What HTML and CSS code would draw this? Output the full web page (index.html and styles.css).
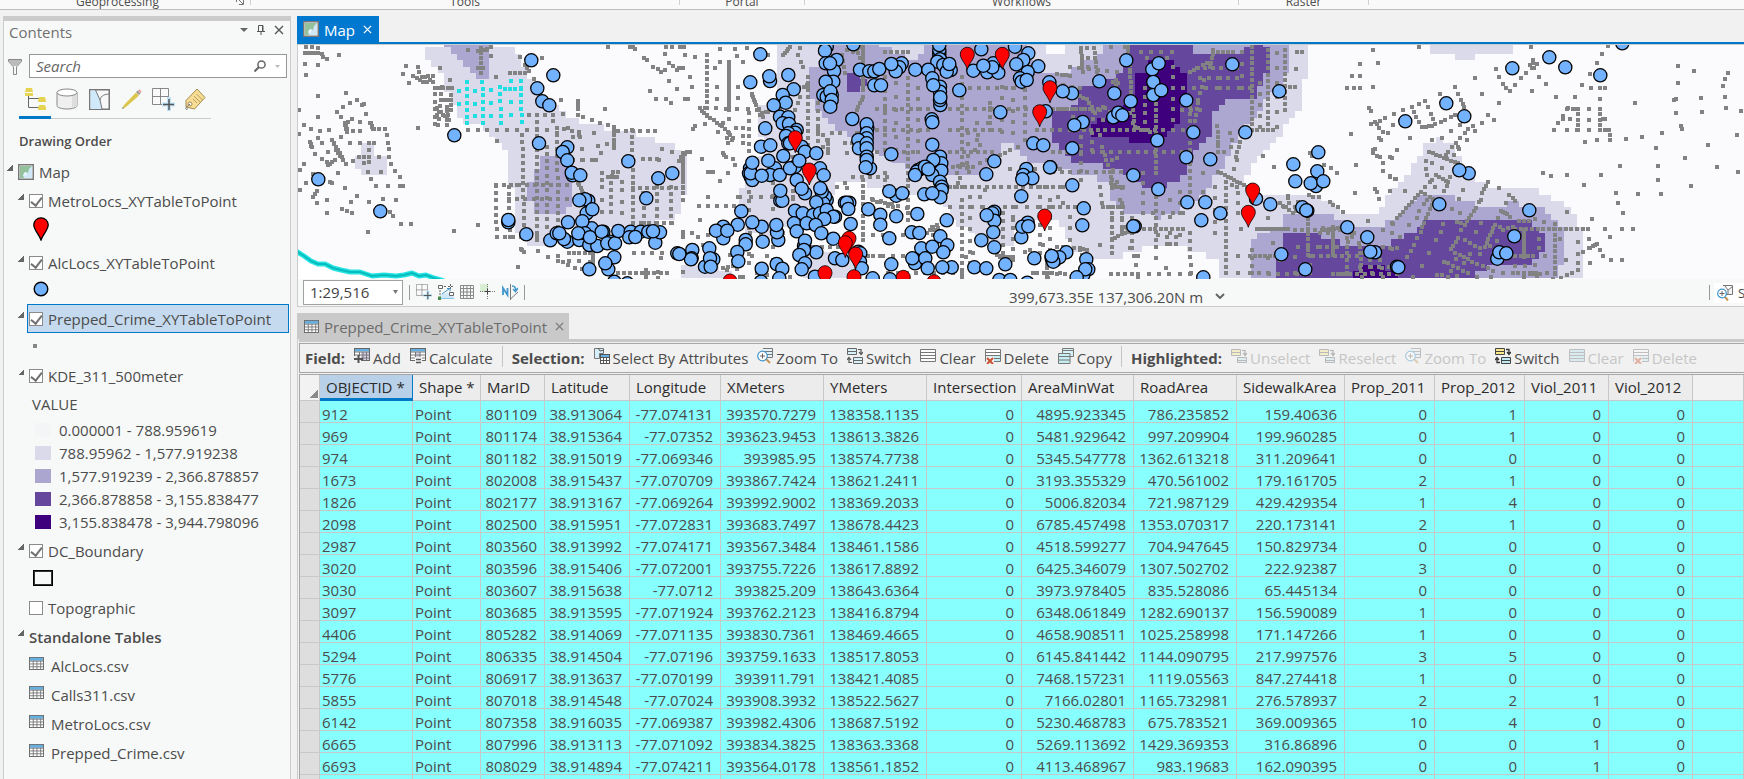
FILE: index.html
```html
<!DOCTYPE html>
<html lang="en">
<head>
<meta charset="utf-8">
<title>Map</title>
<link rel="stylesheet" href="styles.css">
</head>
<body>
<svg class="sprite" aria-hidden="true">
  <symbol id="i-table" viewBox="0 0 16 14"><rect x=".5" y=".5" width="15" height="13" fill="#fff" stroke="#666"/><rect x="1" y="1" width="14" height="3" fill="#64b0e0"/><path d="M1 4.5h14M1 7.5h14M1 10.5h14M4.5 4v9M8.5 4v9M12.5 4v9" stroke="#777" fill="none"/></symbol>
  <symbol id="i-map" viewBox="0 0 16 16"><rect x=".75" y=".75" width="14.5" height="14.5" fill="#fff" stroke="#777" stroke-width="1.5"/><path d="M2 2h12v12H2z" fill="#93c19b"/><path d="M14 2v12H6l-1-3 2-3 3 1 1-4z" fill="#cfe7f7"/><path d="M5 11l2-3 2 1-1 3z" fill="#e9f4fa"/></symbol>
  <symbol id="i-x" viewBox="0 0 10 10"><path d="M1 1l8 8M9 1l-8 8" stroke="currentColor" stroke-width="1.4" fill="none"/></symbol>
  <symbol id="i-add" viewBox="0 0 16 16"><rect x=".5" y=".5" width="15" height="12" fill="#fff" stroke="#666"/><path d="M1 1h14v2.5H1z" fill="#64b0e0"/><path d="M7 4h8v8H7z" fill="#d7cfe6"/><path d="M1 4h14M1 7h14M1 10h14M5.500 4v8M9 4v8M12.500 4v8" stroke="#777" fill="none"/><path d="M0 8h7v7H0z" fill="#f1f1f1"/><path d="M4.500 7v8M0 11h9" stroke="#555" stroke-width="2"/></symbol>
  <symbol id="i-calc" viewBox="0 0 16 16"><rect x=".5" y=".5" width="15" height="12" fill="#fff" stroke="#666"/><path d="M1 1h14v2.500H1z" fill="#64b0e0"/><path d="M5 4h5v6H5z" fill="#d7cfe6"/><path d="M1 4h14M1 7h14M1 10h14M5.500 4v8M10 4v8" stroke="#777" fill="none"/><path d="M5 9h7v7H5z" fill="#f1f1f1"/><path d="M6 11.500h5M6 14.500h5" stroke="#555" stroke-width="1.500"/></symbol>
  <symbol id="i-selattr" viewBox="0 0 16 16"><path d="M.5 .5h9v5h-4v5h-5z" fill="#d4eefa" stroke="#777"/><path d="M4 0l2 3 4-1" stroke="#555" fill="none"/><rect x="6.500" y="6.500" width="9" height="9" fill="#fff" stroke="#555"/><path d="M7 7h8v2H7z" fill="#64b0e0"/><path d="M7 9.500h8M7 12.500h8M9.500 9v6M12.500 9v6" stroke="#555" fill="none"/></symbol>
  <symbol id="i-zoom" viewBox="0 0 16 16"><path d="M6 .5h9.500v9H9" fill="#e3f3fa" stroke="#777"/><path d="M6 3.500h9M9 6.500h6" stroke="#777"/><path d="M9 11l4 4" stroke="#c99452" stroke-width="2"/><circle cx="5.500" cy="8" r="4.800" fill="#fff" stroke="#3f95cc" stroke-width="1.200"/><path d="M3 8h5M5.500 5.500v5" stroke="#666"/></symbol>
  <symbol id="i-switch" viewBox="0 0 16 16"><path d="M.5 .5h9v6h-9zM.5 3.500h9M6.500 9.500h9v6h-9zM6.500 12.500h9" fill="#d9f1f8" stroke="#666"/><path d="M11 1.500h3V6M12 4l2 2.500L16 4M5 14.500H2V10M0 12l2-2.500L4 12" fill="none" stroke="#555" stroke-width="1.200"/></symbol>
  <symbol id="i-switchy" viewBox="0 0 16 16"><path d="M.5 .5h9v6h-9zM.5 3.500h9" fill="#fbe88a" stroke="#444"/><path d="M6.500 9.500h9v6h-9zM6.500 12.500h9" fill="#bfeaf2" stroke="#444"/><path d="M11 1.500h3V6M12 4l2 2.500L16 4M5 14.500H2V10M0 12l2-2.500L4 12" fill="none" stroke="#333" stroke-width="1.300"/></symbol>
  <symbol id="i-unsel" viewBox="0 0 16 16"><path d="M.5 1.500h9v6h-9zM.5 4.500h9" fill="#fbe88a" stroke="#666"/><path d="M6.500 9.500h9v5h-9zM6.500 12.500h9" fill="#bfeaf2" stroke="#666"/><path d="M11 2.500h3V7M12 5l2 2.500L16 5" fill="none" stroke="#555" stroke-width="1.200"/></symbol>
  <symbol id="i-clear" viewBox="0 0 16 16"><path d="M.5 1.500h15v12H.5zM.5 4.500h15M.5 7.500h15M.5 10.500h15" fill="#fff" stroke="#777"/></symbol>
  <symbol id="i-clearb" viewBox="0 0 16 16"><path d="M.5 1.500h15v12H.5zM.5 4.500h15M.5 7.500h15M.5 10.500h15" fill="#b5e4f0" stroke="#777"/></symbol>
  <symbol id="i-delete" viewBox="0 0 16 16"><path d="M.5 1.500h15v12H.5z" fill="#fff" stroke="#777"/><path d="M1 8h14v5H1z" fill="#c5edf4"/><path d="M.5 4.500h15M.5 7.500h15M.5 10.500h15" stroke="#777"/><path d="M1 8.500h8V16H1z" fill="#f1f1f1"/><path d="M2 10l6 6M8 10l-6 6" stroke="#c9522f" stroke-width="2"/></symbol>
  <symbol id="i-copy" viewBox="0 0 16 16"><path d="M4.500 .5h11v8h-11zM4.500 2.500h11" fill="#d9f1f8" stroke="#777"/><path d="M.5 5.500h11.500v10H.5zM.5 8.500H12M.5 12H12" fill="#c5edf4" stroke="#777"/></symbol>
  <symbol id="i-gridplus" viewBox="0 0 23 23"><path d="M.5 .5h16v16H.5zM8.500 0v17M0 8.500h17" fill="#fafafa" stroke="#888"/><path d="M17 9v14M10 16.500h13" stroke="#bfe3f7" stroke-width="4"/><path d="M17 11v11M11 16.500h11" stroke="#555" stroke-width="1.500"/></symbol>
</svg>

<header class="ribbon">
  <div class="group group-geo"><span>Geoprocessing</span><svg class="launcher" viewBox="0 0 8 5"><path d="M.5 0v2M7.500 0v4.500H3M3 0l4 4" stroke="#777" fill="none"/></svg></div>
  <div class="group group-tools"><span>Tools</span></div>
  <div class="group group-portal"><span>Portal</span></div>
  <div class="group group-work"><span>Workflows</span></div>
  <div class="group group-raster"><span>Raster</span></div>
</header>

<div class="workspace">
  <aside class="contents">
    <div class="panel-head">
      <h1>Contents</h1>
      <button aria-label="Options"><svg width="8" height="4" viewBox="0 0 8 4"><path d="M0 0h8L4 4z" fill="#666"/></svg></button>
      <button aria-label="Pin"><svg width="8" height="10" viewBox="0 0 8 10"><path d="M1.500 6V.5h4.500V6M0 6.500h8M4 6.500V10M5.500 0v6" stroke="#555" fill="none"/></svg></button>
      <button aria-label="Close"><svg width="10" height="10"><use href="#i-x"/></svg></button>
    </div>
    <div class="search-row">
      <svg width="14" height="17" viewBox="0 0 14 17"><path d="M.5 1.500h13v2L8.500 9v7.500h-3V9L.5 3.500z" fill="#f7f9f8" stroke="#888"/><path d="M1 2h12v2L8.500 8h-3L1 4z" fill="#bbb"/></svg>
      <div class="search-box">
        <input type="text" placeholder="Search" aria-label="Search">
        <svg width="12" height="12" viewBox="0 0 12 12"><circle cx="7.500" cy="4.500" r="3.600" fill="none" stroke="#666" stroke-width="1.500"/><path d="M5 7L.5 11.500" stroke="#666" stroke-width="2"/></svg>
        <svg class="tiny" width="5" height="3" viewBox="0 0 5 3"><path d="M0 0h5L2.500 3z" fill="#bbb"/></svg>
      </div>
    </div>
    <nav class="views">
      <button class="active" aria-label="List by drawing order"><svg width="23" height="23" viewBox="0 0 23 23"><path d="M4.500 8v11.500H15M4.500 10.500H15" stroke="#666" fill="none"/><path d="M2 0h6l1 4H1zM1 5h8v3H1zM15 9h6l1 4h-8zM14 13h8v1h-8zM15 17h6l1 3h-8zM14 20h8v2h-8z" fill="#e5d352"/></svg></button>
      <button aria-label="List by data source"><svg width="22" height="22" viewBox="0 0 22 22"><path d="M1 4.500v13c0 2 4.500 3.500 10 3.500s10-1.500 10-3.500v-13" fill="#efefef" stroke="#888"/><path d="M16 6l5-1.500V18l-5 2z" fill="#ddd"/><ellipse cx="11" cy="4.500" rx="10" ry="3.500" fill="#fff" stroke="#888"/></svg></button>
      <button aria-label="List by selection"><svg width="21" height="21" viewBox="0 0 21 21"><rect x=".75" y=".75" width="19.500" height="19.500" fill="#f8f8f8" stroke="#777" stroke-width="1.500"/><path d="M1.500 1.500h5L11 11l2 9H1.500z" fill="#cfe9fa"/><path d="M6.500 1L11 11l2 9M11 11c1-5 5-5.500 9-6" fill="none" stroke="#777"/></svg></button>
      <button aria-label="List by editing"><svg width="21" height="21" viewBox="0 0 21 21"><path d="M1 20l2-4L15 3.500l3 3L5 18z" fill="#dcc64d"/><path d="M15 3l1.500-1.500 3 3L18 6z" fill="#999"/><path d="M17 1.500l1.500-1 2 2-1 1.500z" fill="#e8938a"/><path d="M1 20l1-2 1 1z" fill="#666"/></svg></button>
      <button aria-label="List by snapping"><svg width="23" height="23"><use href="#i-gridplus"/></svg></button>
      <button aria-label="List by labeling"><svg width="22" height="22" viewBox="0 0 22 22"><path d="M2 12.500L13 1l8 8.500-10.500 11.500-8.500-2z" fill="#f8dd94" stroke="#a58a4c"/><path d="M10 8l6 6M12.500 6l6 6M9 11l4 4" stroke="#b69c60"/><circle cx="6" cy="16" r="2" fill="#fff" stroke="#a58a4c"/><path d="M6 16l-4 3.500c-1 2 1 2.500 2 1" fill="none" stroke="#777"/></svg></button>
    </nav>
    <h2>Drawing Order</h2>
    <ul class="tree">
      <li class="row root"><i class="caret"></i><svg width="16" height="16"><use href="#i-map"/></svg><span>Map</span></li>
      <li class="row"><i class="caret"></i><label><input type="checkbox" checked>MetroLocs_XYTableToPoint</label></li>
      <li class="symbol sym-pin"><svg width="16" height="24" viewBox="0 0 16 24"><path d="M8 23C6 17 .8 13 .8 7.800a7.200 7 0 0 1 14.400 0C15.200 13 10 17 8 23z" fill="red" stroke="#000" stroke-width="1.300"/></svg></li>
      <li class="row"><i class="caret"></i><label><input type="checkbox" checked>AlcLocs_XYTableToPoint</label></li>
      <li class="symbol sym-circle"><svg width="16" height="16" viewBox="0 0 16 16"><circle cx="8" cy="8" r="6.800" fill="#73b2ff" stroke="#000" stroke-width="1.400"/></svg></li>
      <li class="row selected"><i class="caret"></i><label><input type="checkbox" checked>Prepped_Crime_XYTableToPoint</label></li>
      <li class="symbol sym-dot"><i></i></li>
      <li class="row"><i class="caret"></i><label><input type="checkbox" checked>KDE_311_500meter</label></li>
      <li class="value">VALUE</li>
      <li class="class"><i class="k1"></i>0.000001 - 788.959619</li>
      <li class="class"><i class="k2"></i>788.95962 - 1,577.919238</li>
      <li class="class"><i class="k3"></i>1,577.919239 - 2,366.878857</li>
      <li class="class"><i class="k4"></i>2,366.878858 - 3,155.838477</li>
      <li class="class last"><i class="k5"></i>3,155.838478 - 3,944.798096</li>
      <li class="row"><i class="caret"></i><label><input type="checkbox" checked>DC_Boundary</label></li>
      <li class="symbol sym-box"><i></i></li>
      <li class="row"><i class="caret none"></i><label><input type="checkbox">Topographic</label></li>
      <li class="row heading"><i class="caret"></i><span>Standalone Tables</span></li>
      <li class="file"><svg width="15" height="13"><use href="#i-table"/></svg>AlcLocs.csv</li>
      <li class="file"><svg width="15" height="13"><use href="#i-table"/></svg>Calls311.csv</li>
      <li class="file"><svg width="15" height="13"><use href="#i-table"/></svg>MetroLocs.csv</li>
      <li class="file"><svg width="15" height="13"><use href="#i-table"/></svg>Prepped_Crime.csv</li>
    </ul>
  </aside>

  <main class="views-area">
    <section class="map-view">
      <div class="tab tab-map"><svg width="16" height="16"><use href="#i-map"/></svg><span>Map</span><button aria-label="Close Map"><svg width="9" height="9"><use href="#i-x"/></svg></button></div>
      <svg class="map" id="map" role="img" aria-label="Crime, alcohol license and metro locations"></svg>
      <div class="status">
        <div class="tools">
          <select aria-label="Scale"><option>1:29,516</option></select>
          <svg class="drop" width="5" height="4" viewBox="0 0 5 4"><path d="M0 0h5L2.500 4z" fill="#777"/></svg>
          <i class="sep"></i>
          <button aria-label="Snapping"><svg width="16" height="16"><use href="#i-gridplus"/></svg></button>
          <button aria-label="Constraints"><svg width="16" height="16" viewBox="0 0 16 16"><path d="M2 11l8-2 6 4v2H2z" fill="#cfe9fa"/><path d="M.5 1.500h4v3h-4zM11.500 8.500h4v3h-4z" fill="#fff" stroke="#666"/><path d="M6 2.500h3M10 2.500h5M12.500 0v5M2 6v6" stroke="#666" stroke-dasharray="2 1"/><path d="M4 10l7-5M9 4.500h3v3" stroke="#3f95cc" fill="none"/><path d="M2 14.500h14" stroke="#8cc4e8"/><path d="M0 12.500h3V16H0z" fill="#4b8a4b"/></svg></button>
          <button aria-label="Grid"><svg width="14" height="14" viewBox="0 0 14 14"><path d="M.5 .5h13v13H.5zM3.500 0v14M7 0v14M10.500 0v14M0 3.500h14M0 7h14M0 10.500h14" fill="none" stroke="#888"/></svg></button>
          <button aria-label="Inference"><svg width="16" height="16" viewBox="0 0 16 16"><path d="M0 0h8v8H0z" fill="#d9efd3"/><path d="M7.500 0v16M0 7.500h16" stroke="#777" stroke-dasharray="1 1"/><path d="M7.500 5v5M5 7.500h5" stroke="#444"/></svg></button>
          <button aria-label="North arrow"><svg width="16" height="16" viewBox="0 0 16 16"><path d="M1 11V4l4.500 7V4" fill="none" stroke="#3f95cc" stroke-width="1.800"/><path d="M8.500 0v16M8.500 15L16 8" stroke="#777"/><path d="M10 2c3 0 4 2 3.500 5M11 5l2.500 2.500L16 4" stroke="#3f95cc" stroke-width="1.500" fill="none"/></svg></button>
          <i class="sep"></i>
        </div>
        <div class="coords">399,673.35E 137,306.20N m <svg width="10" height="6" viewBox="0 0 10 6"><path d="M1 1l4 4 4-4" fill="none" stroke="#666" stroke-width="2"/></svg></div>
        <div class="selected-count"><i class="sep"></i><div class="count-box"><svg width="16" height="16" viewBox="0 0 16 16"><path d="M6 .5h9.500v9H9M8 1l3 4 4-3M11 5v4" fill="#f4f4f4" stroke="#777"/><path d="M8 12l3 3.500" stroke="#c99452" stroke-width="2"/><circle cx="5" cy="8.500" r="4.300" fill="#fff" stroke="#3f95cc" stroke-width="1.200"/><path d="M2.500 8.500h5M5 6v5" stroke="#666"/></svg><span>Se</span></div></div>
      </div>
    </section>

    <section class="table-view">
      <div class="tab tab-table"><svg width="15" height="13"><use href="#i-table"/></svg><span>Prepped_Crime_XYTableToPoint</span><button aria-label="Close table"><svg width="9" height="9"><use href="#i-x"/></svg></button></div>
      <div class="toolbar">
        <b>Field:</b>
        <button><svg><use href="#i-add"/></svg>Add</button>
        <button><svg><use href="#i-calc"/></svg>Calculate</button>
        <i class="sep"></i>
        <b>Selection:</b>
        <button><svg><use href="#i-selattr"/></svg>Select By Attributes</button>
        <button><svg><use href="#i-zoom"/></svg>Zoom To</button>
        <button><svg><use href="#i-switch"/></svg>Switch</button>
        <button><svg><use href="#i-clear"/></svg>Clear</button>
        <button><svg><use href="#i-delete"/></svg>Delete</button>
        <button><svg><use href="#i-copy"/></svg>Copy</button>
        <i class="sep"></i>
        <b>Highlighted:</b>
        <button disabled><svg><use href="#i-unsel"/></svg>Unselect</button>
        <button disabled><svg><use href="#i-unsel"/></svg>Reselect</button>
        <button disabled><svg><use href="#i-zoom"/></svg>Zoom To</button>
        <button><svg><use href="#i-switchy"/></svg>Switch</button>
        <button disabled><svg><use href="#i-clearb"/></svg>Clear</button>
        <button disabled><svg><use href="#i-delete"/></svg>Delete</button>
      </div>
      <div class="table-wrap">
        <table>
          <colgroup><col class="w-sel"><col class="w-oid"><col class="w-shape"><col class="w-mar"><col class="w-lat"><col class="w-lon"><col class="w-m"><col class="w-m"><col class="w-int"><col class="w-area"><col class="w-m"><col class="w-side"><col class="w-prop"><col class="w-prop"><col class="w-viol"><col class="w-viol"><col></colgroup>
          <thead><tr><th class="corner"></th><th class="sorted">OBJECTID *</th><th>Shape *</th><th>MarID</th><th>Latitude</th><th>Longitude</th><th>XMeters</th><th>YMeters</th><th>Intersection</th><th>AreaMinWat</th><th>RoadArea</th><th>SidewalkArea</th><th>Prop_2011</th><th>Prop_2012</th><th>Viol_2011</th><th>Viol_2012</th><th class="rest"></th></tr></thead>
          <tbody id="rows"></tbody>
        </table>
      </div>
    </section>
  </main>
</div>
<script src="app.js"></script>
</body>
</html>
```
FILE: styles.css
```css
* { box-sizing: border-box; }
body {
  margin: 0;
  height: 100vh;
  overflow: hidden;
  display: flex;
  flex-direction: column;
  background: #f1f1f1;
  color: #4c4c4c;
  font: 15px/20px "Open Sans", "Noto Sans", sans-serif;
}
button { border: 0; padding: 0; background: none; color: inherit; font: inherit; display: flex; align-items: center; }
svg { flex: none; display: block; }
.sprite { position: absolute; width: 0; height: 0; }

.ribbon { flex: none; display: flex; height: 10px; background: #f9f9f9; border-bottom: 1px solid #bdbdbd; overflow: hidden; }
.group { display: flex; justify-content: center; align-items: flex-end; height: 5px; border-right: 1px solid #d0d0d0; font-size: 12px; line-height: 16px; }
.group span { margin-bottom: -5px; }
.group-geo { width: 251px; padding-left: 76px; justify-content: space-between; padding-right: 6px; }
.launcher { width: 8px; height: 5px; }
.group-tools { width: 429px; }
.group-portal { width: 125px; }
.group-work { width: 434px; }
.group-raster { width: 130px; }

.workspace { flex: 1; min-height: 0; display: flex; gap: 6px; padding: 6px 0 0 3px; }
.contents { flex: none; width: 288px; border: 1px solid #cbcbcb; border-top-width: 5px; border-bottom: 0; background: #f7f9f8; overflow: hidden; }
.panel-head { display: flex; align-items: center; gap: 9px; height: 22px; padding: 0 6px 0 5px; }
.panel-head h1 { margin: 0 auto 0 0; font-size: 15px; font-weight: 400; color: #707070; }
.panel-head button { color: #555; height: 14px; margin-bottom: 4px; }
.search-row { display: flex; align-items: center; gap: 7px; padding: 11px 3px 0 4px; }
.search-box { flex: 1; display: flex; align-items: center; height: 24px; border: 1px solid #979797; background: #fff; padding: 0 6px; gap: 9px; }
.search-box input { flex: 1; min-width: 0; border: 0; outline: 0; padding: 0; background: none; font: inherit; color: #555; }
.search-box input::placeholder { font-style: italic; color: #666; opacity: 1; }
.views { display: flex; width: 192px; height: 41px; margin-left: 15px; border-bottom: 1px solid #cbcbcb; }
.views button { width: 32px; height: 41px; justify-content: center; padding-top: 4px; border-bottom: 3px solid transparent; }
.views .active { border-color: #0078c8; }
h2 { margin: 12px 0 6px 15px; font-size: 13px; line-height: 20px; font-weight: 600; }

.tree { list-style: none; margin: 0; padding: 0; }
.row { display: flex; align-items: center; height: 29px; padding-left: 14px; }
.row.root { padding-left: 3px; gap: 5px; }
.row.root .caret { margin-right: 0; }
.row label { display: flex; align-items: center; gap: 5px; height: 29px; flex: 1; padding-left: 1px; margin-right: 1px; border: 1px solid transparent; }
.row.selected label { background: #c5daee; border-color: #0078c8; }
.caret { width: 6px; height: 6px; margin: 0 3px 8px 0; background: linear-gradient(135deg, transparent 50%, #666 50%); flex: none; }
.caret.none { background: none; }
.heading span { font-weight: 600; padding-left: 2px; }
input[type=checkbox] { appearance: none; margin: 0; width: 14px; height: 14px; border: 1px solid #8a8a8a; background: #fff; display: grid; place-items: center; }
input[type=checkbox]:checked::after { content: ""; width: 5px; height: 9px; border: solid #707070; border-width: 0 2px 2px 0; transform: rotate(38deg); margin-bottom: 2px; }
.symbol { display: flex; align-items: center; padding-left: 29px; }
.sym-pin { height: 33px; padding-bottom: 5px; }
.sym-circle { height: 27px; padding-bottom: 3px; padding-left: 29px; }
.sym-dot { height: 28px; padding-bottom: 2px; }
.sym-dot i { width: 4px; height: 4px; background: #868686; }
.sym-box { height: 28px; padding-bottom: 2px; }
.sym-box i { width: 20px; height: 16px; border: 1px solid #000; box-shadow: inset 0 0 0 1px #333; }
.value { height: 28px; line-height: 28px; padding-left: 28px; font-weight: 500; }
.class { display: flex; align-items: center; height: 23px; gap: 8px; padding-left: 31px; }
.class.last { margin-bottom: 3px; }
.class i { width: 16px; height: 14px; }
.k1 { background: #f4f5f6; }
.k2 { background: #dadaea; }
.k3 { background: #aaa6d0; }
.k4 { background: #65489e; }
.k5 { background: #3f007d; }
.file { display: flex; align-items: center; height: 29px; gap: 7px; padding-left: 25px; }
.file svg { margin-bottom: 4px; }

.views-area { flex: 1; min-width: 0; display: flex; flex-direction: column; }
.tab { display: flex; align-items: center; width: max-content; height: 26px; padding: 0 7px 0 6px; }
.tab span { margin: 2px 8px 0 5px; }
.tab-map { background: #0078d0; color: #fff; }
.map-view { flex: none; border-bottom: 1px solid #cbcbcb; }
.map { width: 100%; height: 235px; margin-top: 2px; border: 1px solid #cbcbcb; border-width: 1px 0 0 1px; background: #fbfbfe; box-shadow: 0 -2px 0 #0078c8; }
.status { display: flex; justify-content: space-between; height: 27px; background: #f7f9f8; border-left: 1px solid #cbcbcb; overflow: hidden; }
.tools { display: flex; align-items: center; gap: 6px; padding-left: 5px; padding-bottom: 1px; }
.tools select { appearance: none; width: 100px; height: 25px; border: 1px solid #a0a0a0; border-radius: 0; background: #fff; padding: 0 6px; font: inherit; color: #444; }
.tools .drop { margin: 0 5px 0 -16px; }
.sep { width: 1px; height: 15px; background: #999; }
.coords { display: flex; align-items: center; gap: 12px; padding-top: 8px; line-height: 18px; }
.coords svg { margin-bottom: 2px; }
.selected-count { display: flex; align-items: center; gap: 4px; }
.count-box { display: flex; align-items: center; gap: 5px; width: 30px; height: 20px; padding-left: 3px; background: #fff; overflow: hidden; font-size: 13px; }

.table-view { flex: 1; min-height: 0; display: flex; flex-direction: column; margin-top: 6px; border-left: 1px solid #cbcbcb; }
.tab-table { flex: none; background: #c9c9c9; color: #6b6b6b; padding-right: 5px; }
.tab-table button { color: #777; }
.toolbar { flex: none; display: flex; align-items: center; gap: 9px; height: 34px; margin-left: 1px; padding: 0 5px 2px 6px; border-top: 3px solid #c9c9c9; box-shadow: inset 0 1px 0 #f1f1f1, inset 0 2px 0 #a6a6a6, inset 1px 0 0 #a6a6a6; border-bottom: 1px solid #a6a6a6; overflow: hidden; white-space: nowrap; }
.toolbar b { margin: 3px 0 0; }
.toolbar button { gap: 3px; padding-top: 3px; }
.toolbar button svg { width: 16px; height: 16px; margin-bottom: 3px; }
.toolbar button:disabled { color: #c6c6c6; }
.toolbar button:disabled svg { opacity: .4; }
.toolbar .sep { height: 21px; background: #c4c4c4; }
.table-wrap { flex: 1; min-height: 0; margin: 1px 0 0 1px; overflow: hidden; border: 1px solid #a6a6a6; border-width: 1px 0 0 1px; background: #8ff; }
table { width: 100%; table-layout: fixed; border-collapse: separate; border-spacing: 0; }
th, td { padding: 0; border: 1px solid #c8c8c8; border-width: 0 1px 1px 0; text-align: left; white-space: nowrap; overflow: hidden; }
th { height: 26px; padding: 0 0 2px 6px; background: #ececec; color: #2b2b2b; font-weight: 400; }
th.sorted { background: #b9d1e8; border-right-color: #0078c8; border-bottom: 3px solid #0078c8; padding-bottom: 0; }
th.rest { background: #f2f2f2; }
th.corner { background: linear-gradient(135deg, transparent 50%, #8a8a8a 50%) no-repeat right 1px bottom 2px / 8px 8px #f2f2f2; }
td { height: 22px; text-align: right; background: #8ff; }
td:first-child { background: #dedede; }
td span { display: block; height: 19px; margin-bottom: 2px; padding: 3px 7px 0 0; overflow: hidden; }
td:nth-child(2), td:nth-child(3) { text-align: left; }
td:nth-child(2) span, td:nth-child(3) span { padding-left: 2px; }
.w-sel { width: 20px; }
.w-oid { width: 93px; }
.w-shape { width: 68px; }
.w-mar { width: 64px; }
.w-lat { width: 85px; }
.w-lon { width: 91px; }
.w-m { width: 103px; }
.w-int { width: 95px; }
.w-area { width: 112px; }
.w-side { width: 108px; }
.w-prop { width: 90px; }
.w-viol { width: 84px; }
```
FILE: app.js
```javascript
const records = `912 801109 38.913064 -77.074131 393570.7279 138358.1135 0 4895.923345 786.235852 159.40636 0 1 0 0
969 801174 38.915364 -77.07352 393623.9453 138613.3826 0 5481.929642 997.209904 199.960285 0 1 0 0
974 801182 38.915019 -77.069346 393985.95 138574.7738 0 5345.547778 1362.613218 311.209641 0 0 0 0
1673 802008 38.915437 -77.070709 393867.7424 138621.2411 0 3193.355329 470.561002 179.161705 2 1 0 0
1826 802177 38.913167 -77.069264 393992.9002 138369.2033 0 5006.82034 721.987129 429.429354 1 4 0 0
2098 802500 38.915951 -77.072831 393683.7497 138678.4423 0 6785.457498 1353.070317 220.173141 2 1 0 0
2987 803560 38.913992 -77.074171 393567.3484 138461.1586 0 4518.599277 704.947645 150.829734 0 0 0 0
3020 803596 38.915406 -77.072001 393755.7226 138617.8892 0 6425.346079 1307.502702 222.92387 3 0 0 0
3030 803607 38.915638 -77.0712 393825.209 138643.6364 0 3973.978405 835.528086 65.445134 0 0 0 0
3097 803685 38.913595 -77.071924 393762.2123 138416.8794 0 6348.061849 1282.690137 156.590089 1 0 0 0
4406 805282 38.914069 -77.071135 393830.7361 138469.4665 0 4658.908511 1025.258998 171.147266 1 0 0 0
5294 806335 38.914504 -77.07196 393759.1633 138517.8053 0 6145.841442 1144.090795 217.997576 3 5 0 0
5776 806917 38.913637 -77.070199 393911.791 138421.4085 0 7468.157231 1119.05563 847.274418 1 0 0 0
5855 807018 38.914548 -77.07024 393908.3932 138522.5627 0 7166.02801 1165.732981 276.578937 2 2 1 0
6142 807358 38.916035 -77.069387 393982.4306 138687.5192 0 5230.468783 675.783521 369.009365 10 4 0 0
6665 807996 38.913113 -77.071092 393834.3825 138363.3368 0 5269.113692 1429.369353 316.86896 0 0 1 0
6693 808029 38.914894 -77.074211 393564.0178 138561.1852 0 4113.468967 983.19683 162.090395 0 0 1 0`;

const cell = v => `<td><span>${v}</span></td>`;
document.getElementById("rows").innerHTML = records.split("\n").map(line => {
  const [id, ...rest] = line.split(" ");
  return "<tr>" + ["", id, "Point", ...rest, ""].map(cell).join("") + "</tr>";
}).join("") + "<tr>" + cell("").repeat(17) + "</tr>";

/* Density surface: outlines per class, filled cell by cell. */
const OX = 298, OY = 45, CELL = 6.4, PX = 5.4 - 6.4, PY = 2.3 - 6.4;
const surface = [
  ["#dbdaeb", [419,45,425,54,431,66,444,79,444,87,451,92,457,117,470,123,483,123,489,137,502,143,508,150,508,183,515,187,515,233,521,233,534,246,547,246,560,230,675,222,681,200,688,187,688,170,681,150,662,143,649,137,623,130,585,125,572,118,559,110,547,100,527,75,521,58,515,45]],
  ["#dbdaeb", [361,143,374,143,374,150,380,156,387,156,387,175,361,175,361,170,355,170,355,156,361,156]],
  ["#dbdaeb", [681,264,734,270,734,279,681,279]],
  ["#dbdaeb", [800,250,850,250,855,279,800,279]],
  ["#dbdaeb", [777,45,777,100,757,110,757,130,765,140,760,160,743,180,740,200,740,213,747,233,770,238,790,225,830,200,835,181,861,181,867,188,887,188,945,203,953,220,963,227,975,237,1000,246,1014,246,1014,227,1033,220,1050,220,1063,227,1070,247,1093,258,1122,258,1122,252,1155,246,1181,246,1193,252,1213,258,1220,267,1220,280,1584,280,1584,227,1577,227,1577,218,1570,213,1570,207,1564,207,1564,201,1552,201,1552,194,1539,194,1539,188,1497,188,1480,182,1468,170,1457,157,1453,143,1443,143,1440,137,1437,143,1424,143,1424,150,1417,157,1411,170,1403,182,1390,190,1385,207,1377,214,1340,213,1327,200,1310,194,1251,193,1245,187,1245,177,1252,163,1263,150,1277,137,1289,123,1295,117,1302,103,1302,80,1309,78,1309,40,777,40]],
  ["#dbdaeb", [1430,40,1513,40,1513,54,1475,54,1475,60,1456,60,1456,54,1430,54]],
  ["#fbfbfe", [1048,40,1065,40,1065,54,1048,54]],
  ["#aba7d1", [442,40,452,54,457,60,463,66,470,72,476,79,489,79,489,40]],
  ["#aba7d1", [540,156,572,156,572,207,560,213,553,219,547,213,534,213,534,200,527,200,527,188,534,180]],
  ["#aba7d1", [808,67,810,97,817,97,817,110,823,117,830,123,835,128,848,133,855,137,872,150,887,155,900,162,910,168,920,175,988,175,988,163,995,157,1002,150,1002,143,1013,143,1013,150,1027,157,1033,162,1060,170,1093,177,1112,187,1112,200,1122,213,1150,213,1157,219,1163,213,1180,213,1183,207,1198,200,1205,193,1212,182,1223,170,1230,150,1237,137,1250,123,1263,107,1270,93,1283,80,1289,63,1289,40,1104,40,1103,53,1090,60,1072,67,1072,73,1045,75,1033,63,1027,53,1025,40,925,40,922,55,918,60,892,54,892,48,860,40,830,40,828,65]],
  ["#aba7d1", [1250,280,1252,247,1257,233,1277,227,1283,218,1290,214,1327,214,1340,218,1347,227,1377,227,1400,218,1405,207,1417,200,1424,194,1455,194,1457,201,1470,201,1477,207,1507,207,1507,201,1520,201,1523,207,1545,207,1545,213,1557,218,1557,227,1564,227,1564,265,1558,265,1558,280]],
  ["#65489e", [841,79,848,73,860,73,867,80,862,92,848,92,848,83]],
  ["#65489e", [1130,40,1127,60,1118,73,1110,80,1093,87,1075,88,1075,107,1052,112,1052,143,1063,150,1072,157,1072,162,1103,162,1105,168,1117,170,1130,177,1143,182,1143,187,1167,188,1173,182,1187,175,1187,168,1193,163,1197,150,1207,143,1213,123,1217,107,1232,98,1253,97,1258,88,1263,80,1268,67,1268,53,1263,40,1254,40,1245,54,1194,54,1194,40]],
  ["#65489e", [1277,280,1277,252,1283,247,1283,238,1290,233,1320,233,1322,238,1340,240,1340,246,1390,246,1397,240,1410,233,1417,227,1424,220,1483,220,1485,225,1490,220,1533,220,1533,227,1545,233,1545,252,1533,258,1533,265,1493,265,1487,271,1475,272,1475,280]],
  ["#3f007d", [1147,60,1173,60,1180,73,1187,73,1187,97,1180,103,1180,123,1173,125,1167,133,1152,143,1129,143,1129,137,1092,137,1090,128,1100,120,1120,110,1130,100,1137,90,1137,73,1145,70]],
  ["#3f007d", [1353,280,1353,272,1365,265,1380,265,1387,272,1400,273,1400,280]]
];

function inside(p, x, y) {
  let hit = false;
  for (let i = 0, j = p.length - 2; i < p.length; j = i, i += 2) {
    if ((p[i + 1] > y) !== (p[j + 1] > y) &&
        x < (p[j] - p[i]) * (y - p[i + 1]) / (p[j + 1] - p[i + 1]) + p[i]) hit = !hit;
  }
  return hit;
}

function cells(poly) {
  let d = "";
  for (let r = 0; r < 39; r++) {
    const y0 = Math.round(PY + r * CELL), y1 = Math.round(PY + (r + 1) * CELL);
    let start = null;
    for (let c = 0; c < 228; c++) {
      const on = inside(poly, OX + PX + (c + .5) * CELL, OY + PY + (r + .5) * CELL);
      const x = Math.round(PX + c * CELL);
      if (on && start === null) start = x;
      if (!on && start !== null) { d += `M${start} ${y0}H${x}V${y1}H${start}z`; start = null; }
    }
  }
  return d;
}

/* Map sheets: left edge on the map, point coordinates in thirds of a pixel. */
const sheets = [-8, 382, 752, 1092];
const pairs = s => s.trim().split(/\s+/).map(t => t.split(",").map(Number));
const place = (sheet, [x, y]) => [sheets[sheet] + x / 3, y / 3 - OY];

const circles = [
`724,181 790,226 742,265 757,304 778,316 493,406 747,430 832,442 818,456 832,481 848,526 845,518 871,526 1015,484 1147,520 1105,535 1069,595 85,538 271,634 655,667 655,660 709,703 890,640 895,602 885,598 868,601 907,628 905,685 834,667 877,664 781,721 832,725 822,717 800,700 808,700 868,720 885,700 865,700 898,735 922,738 940,695 900,712 935,695 960,725 952,730 975,730 985,693 1022,695 1018,712 1052,695 1036,711 1075,695 1096,728 1110,697 1089,694 898,808 955,808 973,772 946,790 973,845 1012,850 1162,760`,
`241,163 211,247 270,243 268,229 325,225 341,268 308,285 317,308 281,316 300,350 325,352 308,370 327,372 256,385 350,390 345,398 325,400 318,408 325,430 243,440 271,436 330,430 310,468 365,440 375,455 409,460 210,505 207,520 212,530 217,540 212,520 217,488 285,505 265,482 270,525 245,527 299,525 345,500 330,505 358,482 350,540 420,505 431,526 301,602 307,602 301,572 375,580 365,566 440,600 435,590 430,610 425,575 409,607 421,565 184,634 173,674 130,715 130,680 108,692 142,692 245,680 217,667 248,725 295,720 291,697 289,675 197,720 197,733 172,756 175,784 37,750 88,745 35,775 33,778 -2,762 75,800 100,778 90,775 92,800 245,806 290,792 307,806 243,845 298,835 345,632 342,670 368,640 350,694 400,645 380,670 420,640 440,630 465,650 460,650 433,657 407,675 424,700 372,738 375,722 460,716 409,757 372,750 358,765 375,790 365,808 405,830 465,775 487,780 495,608 508,608 500,608 505,627 512,672 565,628 601,644 601,674 649,649 712,642 628,715 695,697 718,699 800,661 535,755 541,760 540,785 545,805 578,835 634,793 630,838 440,140 435,152 470,180 437,190 462,213 450,190 460,245 437,245 430,285 440,290 455,285 451,274 455,300 451,320 520,133 540,209 568,214 583,214 598,207 665,190 658,202 647,214 634,192 706,209 583,256 603,256 517,357 562,385 560,373 560,400 560,415 535,420 537,445 560,430 560,445 560,470 570,505 560,480 557,502 634,463 778,170 778,160 778,150 778,135 780,178 772,185 745,209 790,195 812,210 800,215 808,192 757,235 780,260 780,275 760,256 781,315 780,300 781,292 838,271 755,358 757,367 757,434 780,470 784,490 760,480 784,512 757,525 715,510 725,505 710,515 705,525 735,500 745,508 780,545 785,560 785,570 781,592 733,583 757,580 649,587 628,574 667,580 904,148 940,190 922,217 955,218 937,202 880,212 910,197 1005,140 1045,160 1030,180 1009,193 1075,199 1043,216 1020,235 1025,245 1040,240 1108,247 961,337 1097,334 1060,430 1090,436 943,484 919,523 1111,502 1039,507 1030,525 1057,535 1027,538 1024,589 943,635 937,640 943,662 920,646 940,697 904,721 943,742 1024,712 1043,668 1027,680 1045,679 781,709 802,736 724,745 757,740 790,757 705,790 697,775 736,775 743,805 815,802 787,802 883,802 919,805 976,793 1063,775 1115,775 1125,780 1115,769 958,840 991,840 1042,848`,
`229,181 307,208 326,190 547,193 148,244 310,285 310,246 334,271 409,301 193,280 242,304 688,274 66,280 38,274 190,352 205,338 217,346 98,366 73,376 430,397 586,397 322,421 67,445 409,472 481,478 250,526 0,502 67,556 325,568 805,457 730,493 736,544 802,514 798,558 782,550 820,544 412,607 466,607 618,596 661,613 757,622 772,632 769,631 101,625 97,676 511,640 454,661 254,679 250,679 892,682 952,712 975,757 961,755 694,763 766,808 49,757 28,772 10,785 5,768 109,778 115,808 100,825 106,808 80,832 460,832`,
`367,205 478,172 526,202 631,226 697,130 169,310 223,349 46,364 236,520 208,511 148,613 418,631 373,709 322,776 328,757 349,760 21,800 25,802`
];

const pins = ["", "862,163 967,163 1110,263 1079,335 346,413 388,510 1094,648 507,715 496,728 527,762 435,818 522,830 670,832 762,845 150,843", "608,570 595,637", ""];

const dots = [
`47,142 65,142 85,145 45,158 55,158 65,158 75,158 85,158 95,162 100,170 110,176 147,166 45,192 83,196 47,225 84,288 348,197 384,202 339,222 449,205 357,249 369,228 380,235 388,215 390,240 400,245 406,232 415,228 420,240 430,228 410,247 430,245 395,232 481,241 28,331 168,278 201,300 180,308 216,316 222,312 160,320 141,336 84,350 228,341 154,352 185,358 173,366 209,366 41,375 165,375 242,370 247,382 63,388 91,394 117,390 167,388 172,396 190,394 211,394 384,385 28,402 60,425 64,438 83,414 96,430 127,420 132,432 154,411 181,428 209,428 76,461 115,455 138,450 143,458 150,468 97,476 111,487 121,492 136,480 159,480 189,484 169,493 43,493 30,509 144,518 48,548 119,545 127,548 31,571 165,565 202,587 183,606 112,601 80,610 80,573 75,582 68,592 110,640 156,626 172,632 187,639 236,605 278,597 318,599 330,558 340,558 257,558 294,558 244,538 233,517 274,515 316,514 330,532 302,493 296,470 296,448 295,428 291,406 285,386 268,386 252,386 208,470 222,470 236,450 236,470 237,485 222,488 267,470 252,428 236,428 300,637 308,647 332,671 364,673 235,695 491,694 564,675 683,800 622,423 955,142 1020,140 1030,142 1035,148 1063,175 1070,180 1090,200 1103,207 1112,217 1125,161 1125,210 1138,190 1150,198 1167,203 1162,210 1129,142 1145,140 1170,142 1136,242 1161,266 1080,272 1099,298 1129,296 1144,308 1186,298 945,328 863,302 863,322 812,300 820,343 618,230 603,168 535,150 592,146 604,140 689,172 757,175 731,236 70,522 788,362 834,384 866,406 800,400 912,398 951,432 923,438 932,459 918,481 876,448 877,480 935,540 995,545 965,528 935,636 1108,480 1145,455 1116,448 1180,458 1174,470 1168,482 1190,455 695,750 702,755 693,748 803,768 803,782 820,785 834,795 855,803 875,806 774,770 744,752 1180,695 1180,712 1116,760 1113,775 1180,815 1060,760 1033,760 1086,760`,
`12,142 120,146 165,146 200,145 45,170 15,165 10,205 30,230 105,205 190,185 170,168 120,185 35,262 25,298 110,262 175,262 110,298 175,295 45,378 38,388 75,372 130,370 148,358 168,385 115,395 148,400 140,415 155,420 145,430 130,460 138,470 133,465 30,455 65,478 160,478 120,543 92,515 100,515 85,515 15,462 10,470 5,478 165,495 143,520 60,660 85,590 57,618 55,710 85,705 10,700 35,700 175,590 150,765 225,305 215,282 220,292 240,345 232,330 250,350 265,335 355,165 360,145 362,185 370,200 265,165 372,262 380,255 385,262 348,262 500,565 495,548 470,560 480,400 495,430 455,400 445,430 430,440 440,420 580,600 600,605 615,610 625,618 640,622 590,605 635,612 840,500 850,495 860,505 868,515 832,520 840,535 835,550 845,560 825,560 755,680 770,675 765,690 755,690 775,685 890,420 895,405 900,435 885,450 925,370 930,310 930,325 890,370 1015,440 990,450 975,460 960,465 870,620 905,620 870,590 900,590 915,570 1080,590 1110,600 1135,590 1080,560 1100,560 1000,660 1090,735 880,760 858,770 970,760 960,770 950,765 1000,770 1035,755 1050,750 1060,820 1100,820 1100,800 1100,830 130,803 145,800 160,798 170,808 180,830 190,830 140,810 40,735 70,735 260,768 215,768 565,768 600,768 230,820 260,825 330,830 535,160 540,175 530,150 520,155`,
`740,156 757,156 738,208 983,188 969,149 930,193 906,228 930,229 968,261 891,265 912,265 930,265 720,260 735,260 958,325 963,332 1031,342 1005,354 990,362 963,373 980,372 976,365 986,383 998,397 1014,400 987,415 992,420 904,401 970,450 975,448 968,460 980,468 990,470 1020,472 1026,475 1041,450 1000,488 638,469 673,502 780,460 785,468 822,495 843,505 861,518 918,496 916,580 999,514 1020,528 975,568 982,575 988,596 1035,538 863,622 878,636 848,616 840,605 715,588 714,595 718,610 708,620 700,618 735,620 738,634 745,605 777,585 790,590 808,592 955,662 1000,690 1025,670 1040,655 551,506 560,560 545,555 605,640 560,480 558,470 562,455 566,440 570,425 500,378 505,395 505,410 505,425 505,438 505,455 522,455 542,440 545,420 540,400 90,288 100,293 110,298 118,308 125,320 128,332 135,340 145,326 158,322 150,330 165,325 180,335 197,240 190,245 203,248 197,255 150,405 155,440 160,455 165,465 168,480 175,495 240,340 250,370 265,383 285,390 300,395 185,480 200,475 190,510 185,540 195,555 215,565 200,545 210,600 190,620 215,610 185,718 195,713 205,708 215,703 225,698 235,695 215,690 230,685 240,690 225,680 90,750 100,748 112,750 95,765 150,735 240,745 252,768 265,768 258,795 265,830 317,774 348,805 360,733 378,733 350,733 420,700 390,705 350,710 378,710 325,705 840,690 850,680 865,685 835,700 890,715 900,700 895,725 905,710 825,690 573,688 620,688 640,688 690,780 670,730 1025,700`,
`88,140 423,140 653,138 636,162 621,188 600,222 256,235 317,208 327,231 429,181 408,218 393,235 338,253 348,264 360,273 376,255 447,230 467,252 425,273 420,195 430,190 440,192 425,203 433,203 577,255 603,264 629,264 645,264 629,296 498,292 555,290 276,281 327,310 195,262 203,282 150,283 213,300 218,312 223,322 105,302 86,311 65,320 38,331 72,335 11,343 79,350 87,366 9,374 97,380 108,380 118,378 126,377 135,372 152,366 166,359 182,352 196,346 114,322 124,342 129,357 295,346 311,361 275,369 248,378 254,393 235,387 225,400 209,374 182,393 211,414 232,419 198,430 204,440 208,446 187,442 175,455 168,465 155,414 126,420 61,414 21,450 0,470 6,475 192,464 17,538 0,530 44,573 0,573 107,482 127,489 156,503 107,508 110,525 125,540 137,525 148,532 158,537 167,542 175,546 180,530 170,558 163,573 135,560 106,560 120,545 93,575 84,585 75,595 66,605 57,615 48,625 40,635 30,645 20,655 8,672 105,582 120,590 130,597 88,633 82,655 57,675 101,612 110,600 295,545 288,557 282,568 276,580 274,600 268,605 258,625 252,632 244,645 236,655 230,664 220,571 206,597 185,626 210,640 327,565 358,585 368,593 376,603 347,610 333,632 345,640 324,655 459,519 482,528 581,556 632,525 690,498 677,580 744,581 812,581 805,540 805,497 885,474 797,444 817,399 757,412 709,418 660,420 622,420 586,426 660,405 658,390 645,390 735,308 863,197 865,249 913,213 1014,220 1005,238 1000,258 932,295 1005,290 1009,324 1053,332 935,336 859,340 852,300 858,296 872,378 876,388 1040,405 954,435 980,500 1043,515 903,557 685,610 698,639 605,658 531,637 659,711 730,688 695,688 645,688 596,717 609,738 596,745 620,732 630,750 580,755 639,769 664,780 695,780 601,789 528,780 563,725 563,762 563,788 563,810 546,818 530,826 512,834 435,658 462,665 510,716 448,716 448,745 465,769 415,769 375,797 405,797 435,795 160,673 152,696 139,719 117,760 97,797 69,832 82,713 72,735 63,752 50,772 31,712 5,748 213,690 258,696 272,669 205,715 197,725 190,738 183,748 225,720 240,730 255,738 270,745 285,742 290,730 295,718 300,705 305,695 310,685 315,675 330,680 300,738 320,722 195,758 210,765 222,772 235,778 247,785 262,792 280,798 295,805 310,812 163,785 175,790 190,797 205,805 220,812 235,820 197,778 222,790 240,762 270,762 142,825 155,825 175,830 200,828 183,812 260,832 302,830 340,820 368,820 385,820 402,820 402,832 420,822 437,820 450,822 440,828 472,820 494,822 490,838 530,525`
];

/* Streets: x1, y1, x2, y2, number of points. */
const streets = [
[[573,145,573,220,6],[565,203,580,203,3],[565,152,590,150,4],[435,265,485,265,5],[435,282,435,372,5],[455,262,445,375,7],[470,320,470,375,5],[484,285,484,330,4],[440,325,478,360,4],[440,345,475,345,3],[455,300,475,300,3],[660,218,705,218,4],[705,195,718,212,3],[533,390,770,390,9],[697,405,702,675,14],[742,345,742,720,19],[772,440,772,680,12],[800,385,805,680,15],[718,345,790,345,4],[617,558,620,710,8],[657,560,660,710,8],[680,556,680,598,2],[617,556,830,556,10],[657,598,830,598,8],[620,712,740,712,6],[863,310,863,345,3],[880,352,955,376,4],[972,380,972,445,6],[1027,390,1027,470,5],[985,392,1095,392,6],[800,385,868,395,4],[850,410,870,412,2],[963,548,963,635,5],[1028,490,1030,670,10],[1060,580,1062,670,5],[1100,560,1100,670,6],[1143,560,1143,670,6],[1060,478,1100,478,3],[1028,563,1180,563,8],[1178,490,1178,563,5],[1030,670,1145,668,6],[955,530,980,530,4],[970,515,985,515,2],[995,570,995,640,3],[935,520,935,600,3],[860,540,880,580,6],[836,758,900,758,5],[836,782,900,785,3],[910,750,910,790,5],[983,818,1130,818,9],[1068,810,1068,835,3],[1105,815,1105,835,2],[850,480,905,480,3],[127,420,155,470,6],[60,425,66,440,3],[165,370,172,395,4],[240,368,250,388,3],[115,495,125,487,2]],
[[80,165,80,325,10],[146,185,146,330,13],[60,325,80,345,4],[72,340,120,375,6],[75,325,300,327,8],[125,378,160,415,5],[385,230,385,455,12],[415,310,415,470,8],[345,262,385,262,4],[360,290,345,330,3],[330,140,310,165,5],[550,140,550,270,12],[550,290,530,330,5],[415,390,445,420,3],[445,420,445,460,4],[500,150,545,140,5],[485,165,495,220,4],[615,155,685,155,5],[615,230,615,450,11],[648,250,648,450,6],[683,235,683,660,22],[715,265,715,455,7],[590,327,770,327,8],[590,390,745,390,7],[590,455,700,455,5],[845,230,845,470,12],[810,327,1140,327,14],[810,390,960,390,7],[810,455,935,455,7],[870,265,1030,265,7],[930,310,930,390,5],[965,260,965,395,5],[1000,265,1000,400,5],[1035,270,1035,420,7],[1070,390,1140,390,4],[865,400,865,500,4],[550,540,550,720,11],[550,590,680,625,6],[615,520,615,560,3],[520,530,620,530,5],[820,500,860,490,4],[810,562,1140,562,16],[810,620,1140,620,11],[845,600,845,830,12],[870,620,870,790,6],[970,640,970,760,6],[1000,620,1000,780,6],[1080,620,1080,760,6],[1110,620,1110,750,5],[990,507,1140,507,5],[880,500,920,480,3],[550,704,790,704,9],[520,768,700,768,7],[207,340,207,500,8],[207,550,207,790,10],[280,550,280,780,7],[180,590,340,590,6],[57,618,190,618,6],[190,385,190,430,3],[10,480,10,600,7],[340,420,340,700,12],[210,700,340,700,5],[400,740,500,740,5],[625,820,845,820,9],[1070,820,1140,820,4],[760,680,740,700,3],[530,400,500,460,3],[950,765,990,772,5],[1100,790,1105,835,4],[245,340,270,330,3],[215,285,235,330,4]],
[[93,145,98,215,7],[132,145,140,215,6],[110,145,115,200,3],[233,140,240,210,6],[240,215,245,290,6],[22,222,60,228,4],[15,250,90,265,4],[60,200,200,215,6],[183,140,225,140,2],[272,155,365,155,4],[290,175,350,175,3],[368,200,368,360,6],[317,260,317,520,16],[285,265,285,390,6],[250,330,255,380,4],[10,327,120,327,9],[60,390,315,390,13],[70,350,160,360,4],[92,385,92,540,7],[125,400,125,450,3],[10,455,92,455,5],[130,455,395,455,11],[340,390,400,390,3],[395,330,450,330,3],[420,300,420,620,16],[445,310,430,380,5],[463,240,445,300,4],[420,215,470,190,5],[440,205,560,205,6],[450,235,560,235,5],[400,265,600,265,7],[480,200,490,150,5],[490,155,550,155,5],[605,140,605,390,16],[655,150,655,390,14],[705,150,705,330,11],[630,250,630,380,5],[680,160,680,380,6],[577,155,577,265,4],[605,390,670,390,5],[510,235,510,265,2],[10,517,240,517,10],[180,515,185,565,4],[185,562,220,562,4],[160,620,220,620,5],[185,620,185,760,8],[215,620,215,700,5],[185,655,245,655,3],[10,620,95,620,5],[280,520,280,640,5],[317,590,317,740,8],[280,640,400,640,5],[265,688,400,688,9],[245,700,245,745,3],[360,600,360,700,3],[390,575,390,640,3],[505,515,590,560,10],[527,545,527,820,15],[495,560,495,700,5],[460,520,460,575,2],[565,580,565,640,3],[655,655,655,655,1],[690,610,730,640,4],[420,700,422,820,6],[620,688,715,688,10],[605,750,605,820,4],[600,768,690,768,7],[565,768,565,820,2],[655,775,655,820,2],[600,820,740,822,6],[735,690,815,690,5],[775,640,775,765,9],[745,740,890,740,6],[790,768,920,768,7],[810,700,810,740,2],[820,685,870,690,4],[850,695,850,765,7],[735,770,735,820,2],[780,768,780,820,3],[850,822,900,822,5],[890,740,890,820,5],[930,740,935,830,6],[960,780,965,820,3],[990,780,1000,830,3],[920,822,1040,822,6],[930,800,1045,800,5],[900,670,940,760,4],[1000,740,1040,745,3],[183,822,245,822,4],[265,822,420,822,6],[20,822,70,822,3],[20,740,90,745,5],[60,650,60,720,3],[150,560,155,610,3],[40,560,40,610,2]],
[[117,456,205,490,9],[563,327,563,390,5],[535,325,560,327,3],[530,327,493,390,4],[596,327,596,390,3],[629,327,629,390,5],[520,358,540,358,2],[530,390,562,390,2],[130,600,92,695,8],[200,665,225,675,3],[375,688,595,688,14],[495,672,495,820,10],[402,690,402,770,8],[375,769,430,769,4],[388,663,418,663,3],[340,690,370,680,3],[340,635,360,650,3],[600,745,615,735,2],[425,820,450,822,4],[385,820,420,820,3],[640,358,646,358,2]]
];
const cyan = [[530,247,532,370,7],[577,245,580,368,7],[630,262,633,368,6],[692,243,695,367,7],[645,268,692,268,4],[506,273,604,270,3],[507,312,604,309,3],[555,348,604,348,2],[663,243,663,243,1],[663,307,663,345,2]];

const along = ([x1, y1, x2, y2, n]) => Array.from({ length: n }, (_, i) => {
  const t = n > 1 ? i / (n - 1) : 0;
  return [x1 + (x2 - x1) * t, y1 + (y2 - y1) * t];
});
const square = (sheet, p) => {
  const [x, y] = place(sheet, p);
  return `M${Math.round(x - 2)} ${Math.round(y - 2)}h4v4h-4z`;
};

let out = '<path fill="#fff" d="M0 206C25 226 60 232 142 235H0z"/><g shape-rendering="crispEdges">';
for (const [fill, poly] of surface) out += `<path fill="${fill}" d="${cells(poly)}"/>`;
let d = "";
sheets.forEach((_, s) => {
  pairs(dots[s]).forEach(p => d += square(s, p));
  streets[s].forEach(l => along(l).forEach(p => d += square(s, p)));
});
out += `<path fill="#828282" d="${d}"/>`;
d = "";
cyan.forEach(l => along(l).forEach(p => d += square(0, p)));
out += `<path fill="#20dfe2" d="${d}"/></g>`;
const river = "M-2 206L6 211 13 216 20 219 27 219 35 223 43 225 52 227 62 227 74 231 86 230 98 231 106 230 114 228 121 231 128 230 136 233 146 236";
out += `<g fill="none" stroke-linejoin="round"><path d="${river}" stroke="#25e3e3" stroke-width="5"/><path d="${river}" stroke="#06bcbc" stroke-width="2"/></g>`;
out += '<g fill="#73b2ff" stroke="#000" stroke-width="1.300">';
circles.forEach((list, s) => pairs(list).forEach(p => {
  const [x, y] = place(s, p);
  out += `<circle cx="${x.toFixed(1)}" cy="${y.toFixed(1)}" r="6.600"/>`;
}));
out += '</g><g fill="red" stroke="#000" stroke-width=".8">';
pins.forEach((list, s) => list && pairs(list).forEach(p => {
  const [x, y] = place(s, p);
  out += `<path transform="translate(${x.toFixed(1)} ${y.toFixed(1)})" d="M0 15C-1.500 9-7 5-7 0A7 7 0 0 1 7 0C7 5 1.500 9 0 15z"/>`;
}));
document.getElementById("map").innerHTML = out + "</g>";
```
